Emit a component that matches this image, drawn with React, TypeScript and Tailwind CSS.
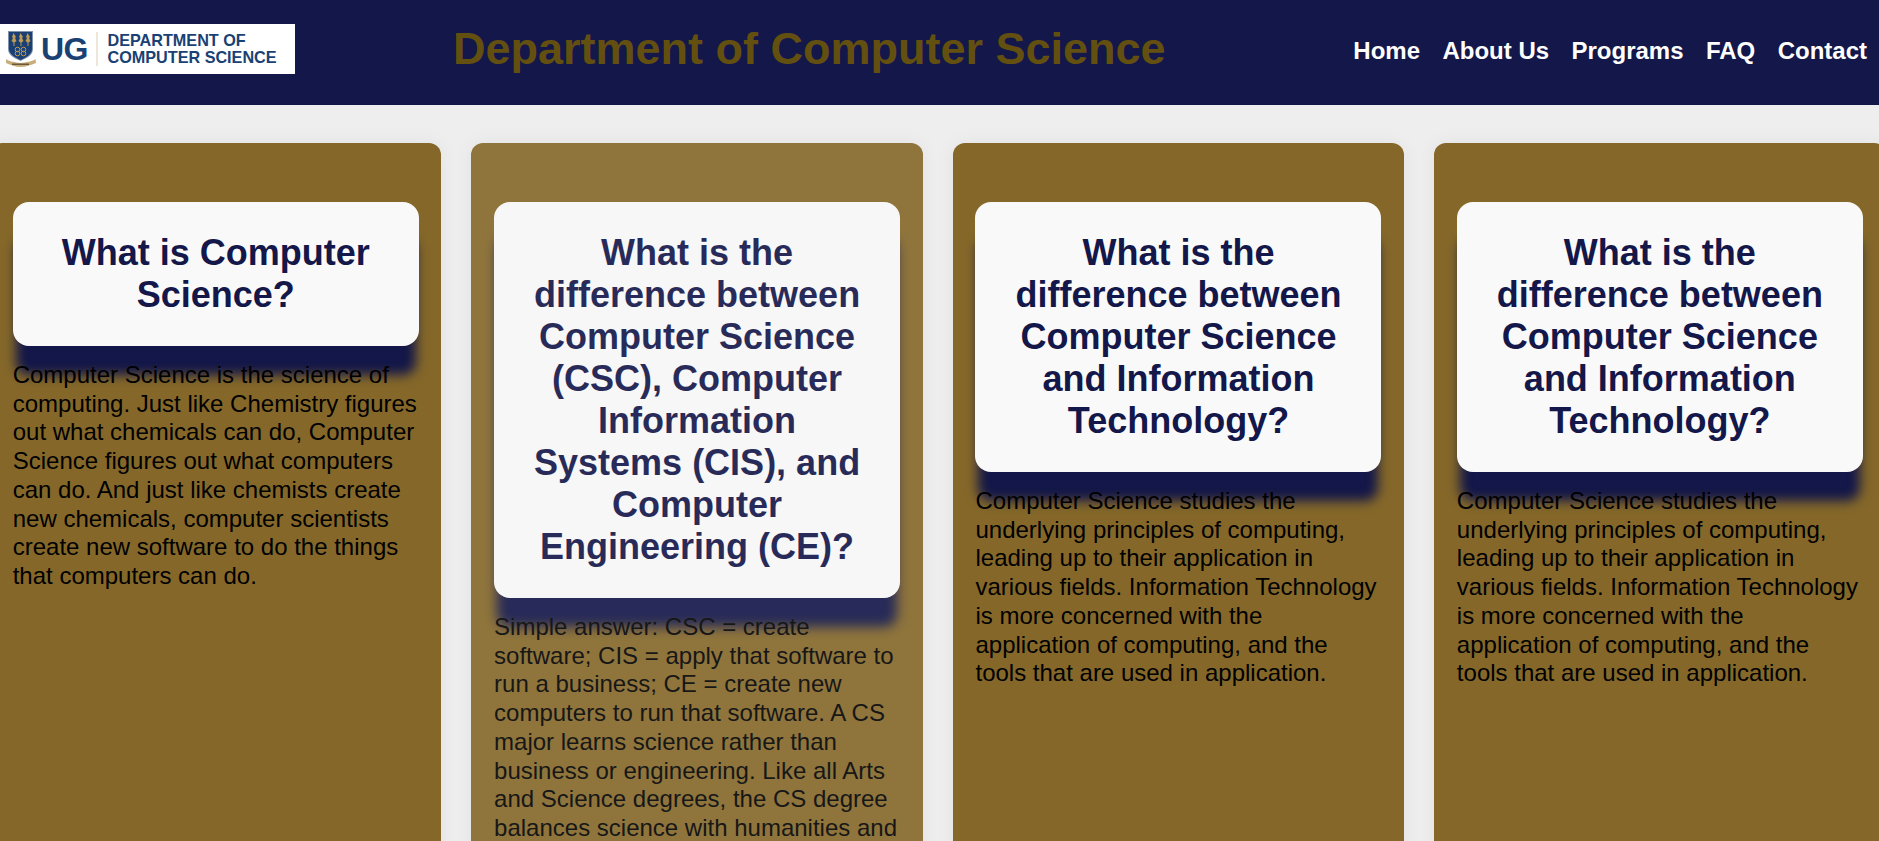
const navLinks = ["Home", "About Us", "Programs", "FAQ", "Contact"];

const cards = [
  {
    title: "What is Computer Science?",
    body: "Computer Science is the science of computing. Just like Chemistry figures out what chemicals can do, Computer Science figures out what computers can do. And just like chemists create new chemicals, computer scientists create new software to do the things that computers can do.",
    faded: false,
  },
  {
    title: "What is the difference between Computer Science (CSC), Computer Information Systems (CIS), and Computer Engineering (CE)?",
    body: "Simple answer: CSC = create software; CIS = apply that software to run a business; CE = create new computers to run that software. A CS major learns science rather than business or engineering. Like all Arts and Science degrees, the CS degree balances science with humanities and",
    faded: true,
  },
  {
    title: "What is the difference between Computer Science and Information Technology?",
    body: "Computer Science studies the underlying principles of computing, leading up to their application in various fields. Information Technology is more concerned with the application of computing, and the tools that are used in application.",
    faded: false,
  },
  {
    title: "What is the difference between Computer Science and Information Technology?",
    body: "Computer Science studies the underlying principles of computing, leading up to their application in various fields. Information Technology is more concerned with the application of computing, and the tools that are used in application.",
    faded: false,
  },
];

function Crest() {
  return (
    <svg width="30" height="36" viewBox="0 0 30 36" className="shrink-0">
      <path d="M2 0h25v18c0 6-6 9-12.500 12C8 27 2 24 2 18z" fill="#8093ad" />
      <path d="M3 1h23v17c0 5.500-5.500 8-11.500 11C9 26 3 23.500 3 18z" fill="#1a3f72" />
      <g fill="#c09a55">
        <path d="M7.500 2l2.500 4-1 1 1.500 3-2 1.500V15h-1v-3.500l-2-1.500L7 7 6 6z" />
        <path d="M14.500 2L17 6l-1 1 1.500 3-2 1.500V15h-1v-3.500l-2-1.500L14 7l-1-1z" />
        <path d="M21.500 2L24 6l-1 1 1.500 3-2 1.500V15h-1v-3.500l-2-1.500L21 7l-1-1z" />
      </g>
      <g fill="none" stroke="#c09a55" strokeWidth="1">
        <circle cx="11.500" cy="18.500" r="2.300" />
        <circle cx="17.500" cy="18.500" r="2.300" />
        <circle cx="11.500" cy="22.500" r="2.300" />
        <circle cx="17.500" cy="22.500" r="2.300" />
      </g>
      <path d="M0 28c4 3 9 3 14.500 4 6-1 11-1 15-4l.5 4c-5 2-10 4-15.500 4S5 34 0 32z" fill="#c9ae7c" />
      <path d="M6 32.500h17v1.500H6z" fill="#6b5a3a" />
    </svg>
  );
}

function Logo() {
  return (
    <div className="flex h-[50px] w-[295px] shrink-0 items-center bg-white pl-[6px] text-[#1a4173]">
      <Crest />
      <span className="ml-[5px] w-[48px] text-[32px] leading-none font-bold tracking-[-0.5px]">UG</span>
      <div className="mr-[9.500px] ml-[7px] h-[34px] w-[2px] bg-[#eee6d8]" />
      <div className="text-[16.200px] leading-[17px] font-bold whitespace-nowrap">
        <div>DEPARTMENT OF</div>
        <div>COMPUTER SCIENCE</div>
      </div>
    </div>
  );
}

function Header() {
  return (
    <header className="flex h-[105px] shrink-0 items-center bg-[#131749] pr-3 pb-[7px]">
      <Logo />
      <h1 className="mb-[2px] ml-[158px] text-[45px] leading-none font-bold whitespace-nowrap text-[#635010]">
        Department of Computer Science
      </h1>
      <nav className="ml-auto flex gap-[22.400px] pt-[4px] text-[24px] font-bold text-white">
        {navLinks.map((link) => (
          <a key={link}>{link}</a>
        ))}
      </nav>
    </header>
  );
}

function Card({ title, body, faded }: { title: string; body: string; faded: boolean }) {
  return (
    <article
      className={
        faded
          ? "h-[800px] w-[451.400px] shrink-0 rounded-xl bg-[#856829] px-[22.700px] pt-[59px] opacity-90 shadow-[0_0_20px_rgba(0,0,0,0.05)]"
          : "h-[800px] w-[451.400px] shrink-0 rounded-xl bg-[#856829] px-[22.700px] pt-[59px] shadow-[0_0_20px_rgba(0,0,0,0.05)]"
      }
    >
      <div className="rounded-2xl bg-[#f9f9f9] p-[30px] text-center shadow-[0_32px_12px_-3px_#131749]">
        <h2 className="text-[36px] leading-[42px] font-bold text-[#131749]">{title}</h2>
      </div>
      <p className="mt-[15px] text-[24px] leading-[28.700px] text-black">{body}</p>
    </article>
  );
}

export default function App() {
  return (
    <div className="flex h-[841px] flex-col overflow-hidden bg-[#eeeeee] font-['Liberation_Sans',Arial,sans-serif]">
      <Header />
      <main className="mt-[38px] -ml-[10px] flex gap-[30px]">
        {cards.map((card, i) => (
          <Card key={i} {...card} />
        ))}
      </main>
    </div>
  );
}
